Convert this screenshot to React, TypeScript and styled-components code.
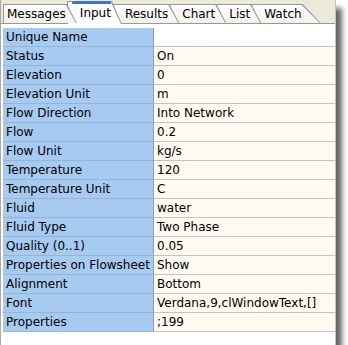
import { Fragment } from 'react';
import styled, { createGlobalStyle } from 'styled-components';

const GlobalStyle = createGlobalStyle`
  html, body {
    margin: 0;
    padding: 0;
    background: #ffffff;
    overflow: hidden;
  }
  body {
    font-family: 'DejaVu Sans', Verdana, sans-serif;
    font-size: 12px;
    color: #000000;
  }
`;

const Panel = styled.div`
  width: 334px;
  height: 100vh;
  background: #ffffff;
  border-left: 1px solid #a8a8a8;
  border-right: 1px solid #c4c4c4;
  box-shadow: 6px 8px 5px rgba(0, 0, 0, 0.6);
  display: flex;
  flex-direction: column;
`;

const TabStrip = styled.div`
  height: 23px;
  flex: none;
  background: #ece9d8;
  display: flex;
  align-items: flex-end;
  padding-left: 2px;
`;

const Tab = styled.div<{ $active?: boolean; $z: number; $first?: boolean; $slant: number }>`
  position: relative;
  z-index: ${(p) => p.$z};
  height: ${(p) => (p.$active ? 23 : 19)}px;
  margin-bottom: ${(p) => (p.$active ? -1 : 0)}px;
  margin-left: ${(p) => (p.$first ? 0 : -10)}px;
  padding: 0 ${(p) => p.$slant + 1}px 0 ${(p) => (p.$first ? 4 : 13)}px;
  display: flex;
  align-items: center;
  padding-top: ${(p) => (p.$active ? 1 : 0)}px;
  box-sizing: border-box;
  white-space: nowrap;
  background: #919b9c;
  clip-path: polygon(0 0, calc(100% - ${(p) => p.$slant}px) 0, 100% 100%, 0 100%);

  &::before {
    content: '';
    position: absolute;
    top: 1px;
    left: 1px;
    right: 1px;
    bottom: 0;
    z-index: -1;
    background: ${(p) =>
      p.$active ? '#fcfcfe' : 'linear-gradient(#fefefe, #f3f2ea)'};
    clip-path: polygon(0 0, calc(100% - ${(p) => p.$slant}px) 0, 100% 100%, 0 100%);
  }

  &::after {
    content: '';
    display: ${(p) => (p.$active ? 'block' : 'none')};
    position: absolute;
    top: 0;
    left: 5px;
    right: ${(p) => p.$slant + 1}px;
    height: 3px;
    border-radius: 2px 2px 0 0;
    background: #3f72cf;
  }
`;

const Page = styled.div`
  flex: 1;
  border-top: 1px solid #919b9c;
  padding: 4px 0 0 2px;
  background: #ffffff;
`;

const Grid = styled.div`
  display: grid;
  grid-template-columns: 151px 1fr;
`;

const NameCell = styled.div`
  height: 18px;
  line-height: 18px;
  padding-left: 3px;
  background: #a6caf0;
  border-bottom: 1px solid #94b4d8;
  border-right: 1px solid #9c9c9c;
  white-space: nowrap;
  overflow: hidden;
`;

const ValueCell = styled.div<{ $editing?: boolean }>`
  height: 18px;
  line-height: 18px;
  padding-left: 3px;
  background: ${(p) => (p.$editing ? '#ffffff' : '#fffbf0')};
  border-bottom: 1px solid #c6c3b8;
  white-space: nowrap;
  overflow: hidden;
`;

const tabs = ['Messages', 'Input', 'Results', 'Chart', 'List', 'Watch'];
const activeTab = 'Input';

const rows: [string, string][] = [
  ['Unique Name', ''],
  ['Status', 'On'],
  ['Elevation', '0'],
  ['Elevation Unit', 'm'],
  ['Flow Direction', 'Into Network'],
  ['Flow', '0.2'],
  ['Flow Unit', 'kg/s'],
  ['Temperature', '120'],
  ['Temperature Unit', 'C'],
  ['Fluid', 'water'],
  ['Fluid Type', 'Two Phase'],
  ['Quality (0..1)', '0.05'],
  ['Properties on Flowsheet', 'Show'],
  ['Alignment', 'Bottom'],
  ['Font', 'Verdana,9,clWindowText,[]'],
  ['Properties', ';199'],
];

export default function App() {
  return (
    <>
      <GlobalStyle />
      <Panel>
        <TabStrip>
          {tabs.map((t, i) => (
            <Tab
              key={t}
              $first={i === 0}
              $active={t === activeTab}
              $z={tabs.length - i}
              $slant={i === tabs.length - 1 ? 18 : 10}
            >
              {t}
            </Tab>
          ))}
        </TabStrip>
        <Page>
          <Grid>
            {rows.map(([name, value], i) => (
              <Fragment key={name}>
                <NameCell>{name}</NameCell>
                <ValueCell $editing={i === 0}>{value}</ValueCell>
              </Fragment>
            ))}
          </Grid>
        </Page>
      </Panel>
    </>
  );
}
